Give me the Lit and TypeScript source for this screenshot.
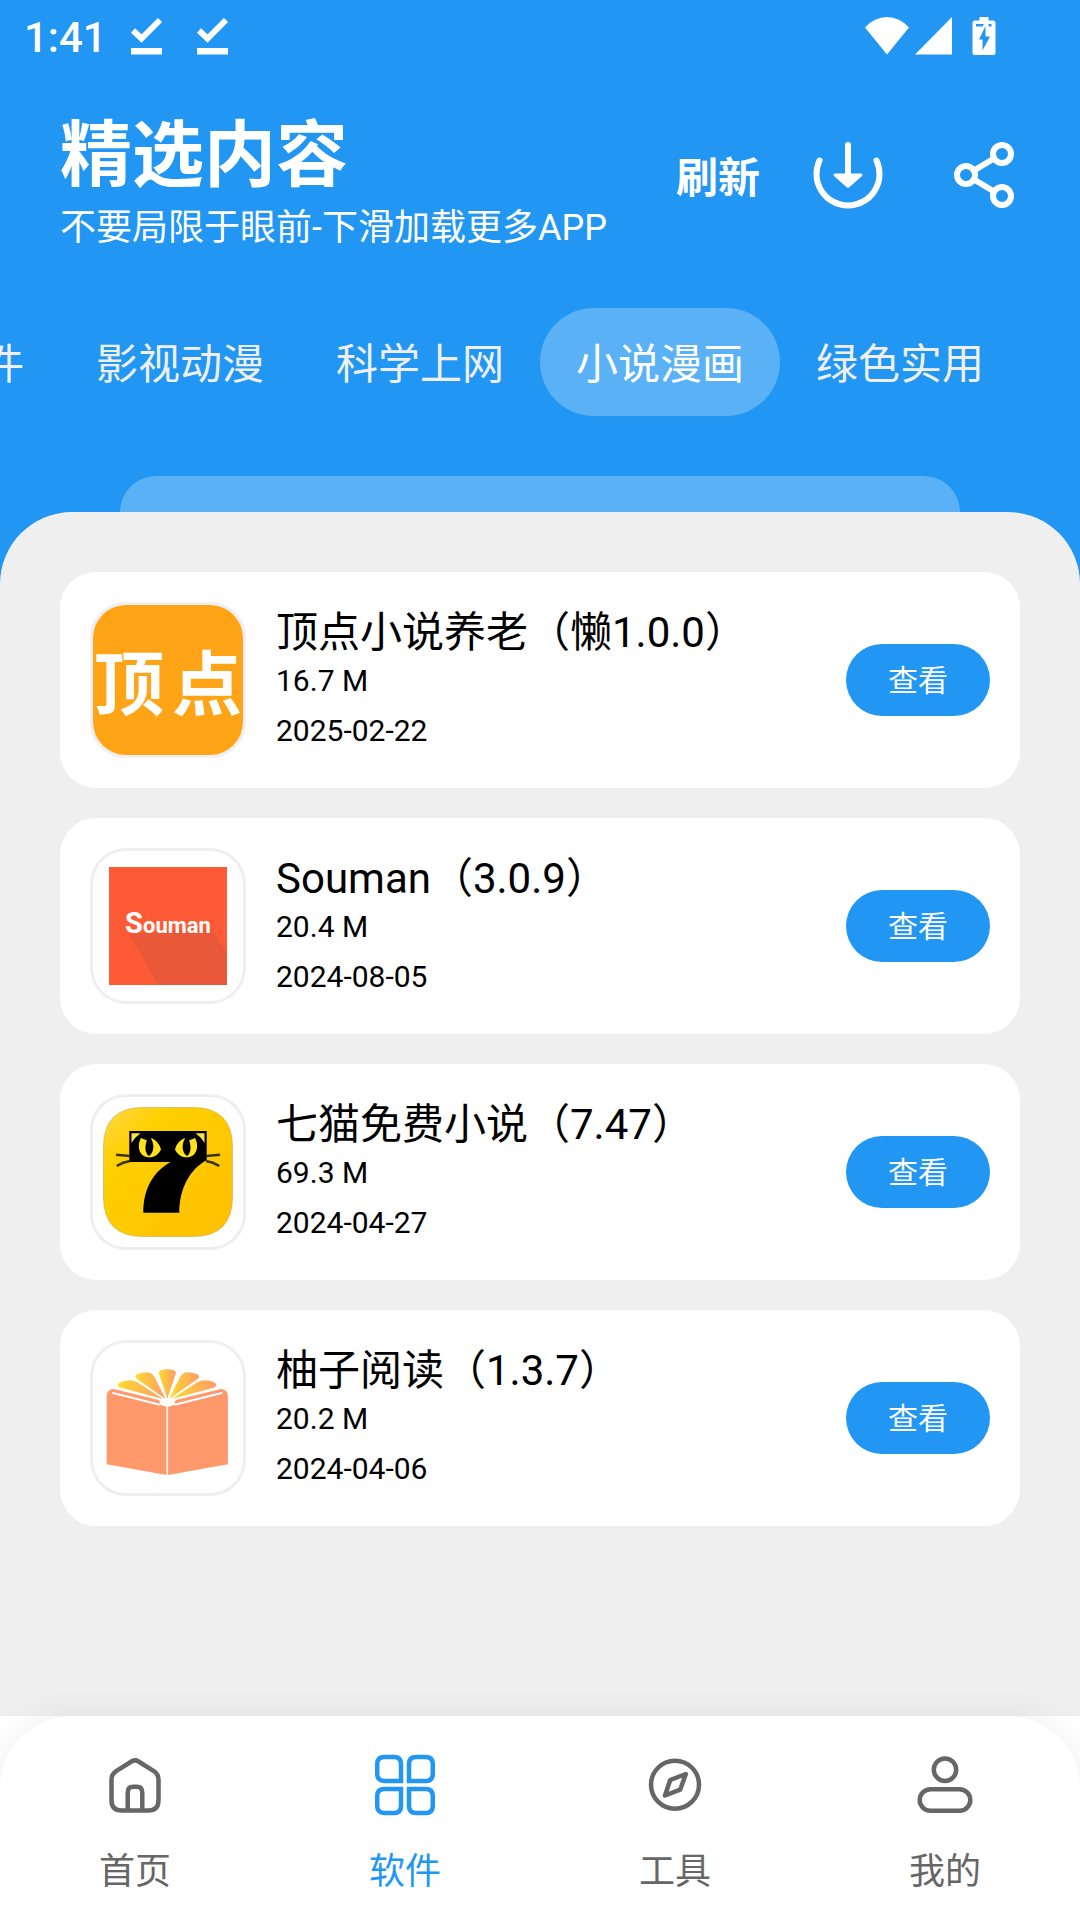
import { html, css, svg, LitElement } from 'lit'
import { customElement, property, state } from 'lit/decorators.js'
import { classMap } from 'lit/directives/class-map.js'

interface AppEntry {
  title: string
  size: string
  date: string
  logo: string
}

const TABS = ['软件', '影视动漫', '科学上网', '小说漫画', '绿色实用']

const APPS: AppEntry[] = [
  { title: '顶点小说养老（懒1.0.0）', size: '16.7 M', date: '2025-02-22', logo: 'dingdian' },
  { title: 'Souman（3.0.9）', size: '20.4 M', date: '2024-08-05', logo: 'souman' },
  { title: '七猫免费小说（7.47）', size: '69.3 M', date: '2024-04-27', logo: 'qimao' },
  { title: '柚子阅读（1.3.7）', size: '20.2 M', date: '2024-04-06', logo: 'youzi' },
]

const NAV = [
  { id: 'home', label: '首页' },
  { id: 'apps', label: '软件' },
  { id: 'tools', label: '工具' },
  { id: 'mine', label: '我的' },
]

const logos: Record<string, unknown> = {
  dingdian: svg`
<rect width="150" height="150" fill="#ffa417"/>
<text class="brush" x="1" y="105">顶</text>
<text class="brush" x="79" y="105">点</text>`,

  souman: svg`
<rect x="16" y="16" width="118" height="118" fill="#ff5a36"/>
<path d="M36 83 L118 77 L134 102 V134 H65Z" fill="#e95838"/>
<text class="wordmark" x="75" y="82" text-anchor="middle"><tspan class="initial">S</tspan>ouman</text>`,

  qimao: svg`
<defs>
  <linearGradient id="gold" x1="0" y1="0" x2="1" y2="1">
    <stop offset="0" stop-color="#ffd84f"/>
    <stop offset=".25" stop-color="#ffd000"/>
    <stop offset="1" stop-color="#ffbf00"/>
  </linearGradient>
</defs>
<path d="M75 10.500 H100 Q139.500 10.500 139.500 50 V100 Q139.500 139.500 100 139.500 H50 Q10.500 139.500 10.500 100 V50 Q10.500 10.500 50 10.500Z" fill="url(#gold)" stroke="#c9a94a" stroke-width=".6"/>
<path d="M36.300 34 H113.700 V63 C96 73 86.500 92 86.300 115.700 H50.300 C50.300 91 61 74 77.700 65 H36.300Z"/>
<path d="M38.500 36.200 H47.500 Q42 40 38.500 46Z M111.500 36.200 H102.500 Q108 40 111.500 46Z" fill="#f4e34a"/>
<g fill="#ffe21a">
  <path d="M48 41 C43.500 49 46 60.300 56.500 60.300 C62 60.300 66 56.500 68 52.500 C66.500 47 63 43 58.500 41.300 L54 43.500Z"/>
  <path d="M102 41 C106.500 49 104 60.300 93.500 60.300 C88 60.300 84 56.500 82 52.500 C83.500 47 87 43 91.500 41.300 L96 43.500Z"/>
</g>
<path d="M55 41 C51 48 52 57 56 59 C61 56 62 47 57.500 41Z M95 41 C99 48 98 57 94 59 C89 56 88 47 92.500 41Z"/>
<path d="M23 57.700 L37 59 M23.700 69 Q30 65 37 64 M127 57.700 L113 59 M126.300 69 Q120 65 113 64" fill="none" stroke="#3a3314" stroke-width="2.500"/>`,

  youzi: svg`
<defs>
  <linearGradient id="petal">
    <stop offset="0" stop-color="#ffdc2e"/>
    <stop offset="1" stop-color="#ff9a68"/>
  </linearGradient>
</defs>
<g fill="url(#petal)">
  <path d="M74.300 56 L66 31 Q65 28 69 27 Q74.300 25.500 80 27 Q84 28 82.600 31Z"/>
  <path d="M72.500 56 L44 36 Q40.500 33 45 31 Q52 28.500 57 29.800 Q60 31 61.500 34Z"/>
  <path d="M70 56 L27 44.500 Q22.500 42 27 39.500 Q33 36.500 40 37.500 Q44 38.500 47 41Z"/>
  <path d="M76 56 L104.600 36 Q108 33 103.600 31 Q96.600 28.500 91.600 29.800 Q88.600 31 87 34Z"/>
  <path d="M78.600 56 L121.600 44.500 Q125 42 121.600 39.500 Q115.600 36.500 108.600 37.500 Q104.600 38.500 101.600 41Z"/>
</g>
<path d="M13.700 53 Q14 46 21 46 L65.500 57 Q68 59 66 61.500 L73.500 63.700 V132 L13.700 121.300Z" fill="#ff986b"/>
<path d="M134.900 53 Q134.600 46 127.600 46 L83.100 57 Q80.600 59 82.600 61.500 L75.100 63.700 V132 L134.900 121.300Z" fill="#ff986b"/>
<path d="M20 50 L66 61.500 M128.600 50 L82.600 61.500" stroke="#fff" stroke-width="2" stroke-linecap="round"/>`,
}

const navIcons: Record<string, unknown> = {
  home: svg`
<path d="M32.500 12.500 Q36 10.300 39.500 12.500 L54.500 21.800 Q59.500 25 59.500 30.500 V51 Q59.500 61.500 49.500 61.500 H22.500 Q12.500 61.500 12.500 51 V30.500 Q12.500 25 17.500 21.800Z"/>
<path d="M28.700 61 V44 Q28.700 37.800 34 37.800 H38 Q43.300 37.800 43.300 44 V61"/>`,
  apps: svg`
<path d="M32 32 H15.500 Q8.200 32 8.200 25 V15 Q8.200 8 15.500 8 H25 Q32 8 32 15Z"/>
<path d="M40 32 V15 Q40 8 47 8 H56.500 Q63.800 8 63.800 15 V25 Q63.800 32 56.500 32Z"/>
<path d="M32 40 V57 Q32 64 25 64 H15.500 Q8.200 64 8.200 57 V47 Q8.200 40 15.500 40Z"/>
<path d="M40 40 H56.500 Q63.800 40 63.800 47 V57 Q63.800 64 56.500 64 H47 Q40 64 40 57Z"/>`,
  tools: svg`
<circle cx="36" cy="35.700" r="24"/>
<path d="M46.800 25 L31.200 31 L26 46.500 L41.200 40.700Z"/>`,
  mine: svg`
<circle cx="36" cy="20.700" r="11.200"/>
<rect x="10.700" y="40.200" width="50.600" height="21.600" rx="10.800"/>`,
}

@customElement('status-bar')
export class StatusBar extends LitElement {
  static styles = css`
:host {
  display: flex;
  align-items: center;
  justify-content: space-between;
  height: 74px;
  padding: 0 84px 0 24px;
  color: #fff;
}

.group {
  display: flex;
  align-items: center;
}

.time {
  margin-right: 24px;
  font-size: 42px;
  font-weight: 500;
}

.done + .done {
  margin-left: 34px;
}

.signal {
  margin: 0 20px 0 4px;
}

svg {
  display: block;
  fill: currentColor;
}
`

  render () {
    const done = html`<svg class="done" width="32" height="40" viewBox="0 0 32 40">
<path d="M0 31h31v6.500H0z"/>
<path d="M2 13.500 L10.500 21.500 L29 3" fill="none" stroke="currentColor" stroke-width="6"/>
</svg>`

    return html`
<div class="group">
  <span class="time">1:41</span>
  ${done}
  ${done}
</div>
<div class="group">
  <svg width="46" height="40" viewBox="0 0 46 40">
    <path d="M1 10.500 Q10.500 0 23 0 Q35.500 0 45 10.500 L23 37.500Z"/>
  </svg>
  <svg class="signal" width="38" height="40" viewBox="0 0 38 40">
    <path d="M38 0 V37.500 H1Z"/>
  </svg>
  <svg width="24" height="40" viewBox="0 0 24 40">
    <path fill-rule="evenodd" d="M7.500-2h9v4.500H21q2.500 0 2.500 2.500V34.500q0 2.500-2.500 2.500H3q-2.500 0-2.500-2.500V5Q.5 2.500 3 2.500h4.500z
      M4 6v2.500h6.500L12 6z M16.500 6v2.500h3V6z M13.500 8 L7 21.500h3.500V32.500L18 18.500h-4.500z" transform="translate(0 1)"/>
  </svg>
</div>
`
  }
}

@customElement('app-card')
export class AppCard extends LitElement {
  static styles = css`
:host {
  display: flex;
  align-items: center;
  gap: 30px;
  padding: 30px;
  border-radius: 36px;
  background-color: #fff;
}

.logo {
  flex: none;
  width: 150px;
  height: 150px;
  border: 3px solid #efefef;
  border-radius: 36px;
  overflow: hidden;
}

.brush {
  font-size: 70px;
  font-weight: 700;
  fill: #fff;
}

.wordmark {
  font-size: 22px;
  font-weight: 700;
  fill: #fff;
}

.initial {
  font-size: 29px;
}

.info {
  flex: 1;
  align-self: flex-start;
  min-width: 0;
}

h2,
p {
  margin: 0;
  color: #000;
  font-weight: 400;
}

h2 {
  font-size: 42px;
  line-height: 62px;
}

p {
  font-size: 30px;
  line-height: 34px;
}

p + p {
  margin-top: 16px;
}

.view {
  flex: none;
  width: 144px;
  height: 72px;
  padding: 0 0 4px;
  border: 0;
  border-radius: 36px;
  color: #fff;
  background-color: #2196f3;
  font: inherit;
  font-size: 30px;
}
`

  @property({ attribute: false }) entry!: AppEntry

  render () {
    const { title, size, date, logo } = this.entry
    return html`
<svg class="logo" viewBox="0 0 150 150" aria-hidden="true">${logos[logo]}</svg>
<div class="info">
  <h2>${title}</h2>
  <p>${size}</p>
  <p>${date}</p>
</div>
<button class="view" type="button">查看</button>
`
  }
}

@customElement('bottom-nav')
export class BottomNav extends LitElement {
  static styles = css`
:host {
  display: block;
  background-color: #fff;
}

nav {
  display: grid;
  grid-template-columns: repeat(4, 1fr);
  padding: 33px 0 21px;
  border-radius: 72px 72px 0 0;
  background-color: #fff;
  box-shadow: 0 0 36px rgba(0, 0, 0, 0.07);
}

.item {
  display: flex;
  flex-direction: column;
  align-items: center;
  gap: 24px;
  color: #666;
  font-size: 36px;
  line-height: 54px;
  text-decoration: none;
}

.item.active {
  color: #2196f3;
}

svg {
  width: 72px;
  height: 72px;
  fill: none;
  stroke: currentColor;
  stroke-width: 4.500;
  stroke-linejoin: round;
}

.active svg {
  stroke-linejoin: miter;
}
`

  @property() active = 'apps'

  render () {
    return html`
<nav>
  ${NAV.map(({ id, label }) => html`
  <a class=${classMap({ item: true, active: id === this.active })} href="#${id}">
    <svg viewBox="0 0 72 72" aria-hidden="true">${navIcons[id]}</svg>
    <span>${label}</span>
  </a>`)}
</nav>
`
  }
}

@customElement('app-root')
export class AppRoot extends LitElement {
  static styles = css`
:host {
  display: flex;
  flex-direction: column;
  min-height: 100vh;
  background-color: #2196f3;
  font-family: Roboto, "Noto Sans CJK SC", sans-serif;
  overflow: hidden;
}

/* Chinese glyphs sit low in the line box, hence the bottom padding */
button {
  padding: 0 0 4px;
  border: 0;
  color: inherit;
  background: none;
  font: inherit;
}

.header {
  display: flex;
  align-items: center;
  justify-content: space-between;
  padding: 30px 48px 0 60px;
  color: #fff;
}

h1 {
  margin: 0;
  font-size: 72px;
  font-weight: 700;
  line-height: 104px;
}

.subtitle {
  margin: 0;
  font-size: 36px;
  line-height: 40px;
}

.actions {
  display: flex;
  align-items: center;
  gap: 40px;
}

.refresh {
  font-size: 42px;
  font-weight: 700;
}

.icon {
  display: grid;
  place-items: center;
  width: 96px;
  height: 96px;
  padding: 0;
}

.icon svg {
  width: 72px;
  height: 72px;
  fill: none;
  stroke: currentColor;
  stroke-width: 6;
  stroke-linecap: round;
  stroke-linejoin: round;
}

.tabs {
  display: flex;
  justify-content: flex-end;
  padding: 60px 60px 60px 0;
}

.tab {
  flex: none;
  height: 108px;
  padding: 0 36px 4px;
  border-radius: 54px;
  color: #efefef;
  font-size: 42px;
}

.tab.selected {
  color: #fff;
  background-color: rgba(255, 255, 255, 0.26);
}

.back-layer {
  height: 36px;
  margin: 0 120px;
  border-radius: 36px 36px 0 0;
  background-color: rgba(255, 255, 255, 0.26);
}

.sheet {
  display: flex;
  flex: 1;
  flex-direction: column;
  gap: 30px;
  padding: 60px;
  border-radius: 72px 72px 0 0;
  background-color: #efefef;
}
`

  @state() private tab = '小说漫画'

  render () {
    return html`
<status-bar></status-bar>
<header class="header">
  <div>
    <h1>精选内容</h1>
    <p class="subtitle">不要局限于眼前-下滑加载更多APP</p>
  </div>
  <div class="actions">
    <button class="refresh" type="button">刷新</button>
    <button class="icon" type="button" aria-label="下载">
      <svg viewBox="0 0 72 72">
        <path d="M7.500 20.500 A31.500 31.500 0 1 0 64.500 20.500 M36 5 V40"/>
        <path d="M23 35 H49 L36 46.500Z" fill="currentColor" stroke-width="3"/>
      </svg>
    </button>
    <button class="icon" type="button" aria-label="分享">
      <svg viewBox="0 0 72 72">
        <circle cx="54" cy="14" r="9"/>
        <circle cx="18" cy="35" r="9"/>
        <circle cx="54" cy="56" r="9"/>
        <path d="M26 30.500 L46 18.500 M26 39.500 L46 51.500"/>
      </svg>
    </button>
  </div>
</header>
<div class="tabs" role="tablist">
  ${TABS.map((name) => html`
  <button
    class=${classMap({ tab: true, selected: name === this.tab })}
    type="button"
    role="tab"
    aria-selected=${name === this.tab}
    @click=${() => { this.tab = name }}
  >${name}</button>`)}
</div>
<div class="back-layer"></div>
<main class="sheet">
  ${APPS.map((entry) => html`<app-card .entry=${entry}></app-card>`)}
</main>
<bottom-nav></bottom-nav>
`
  }
}
